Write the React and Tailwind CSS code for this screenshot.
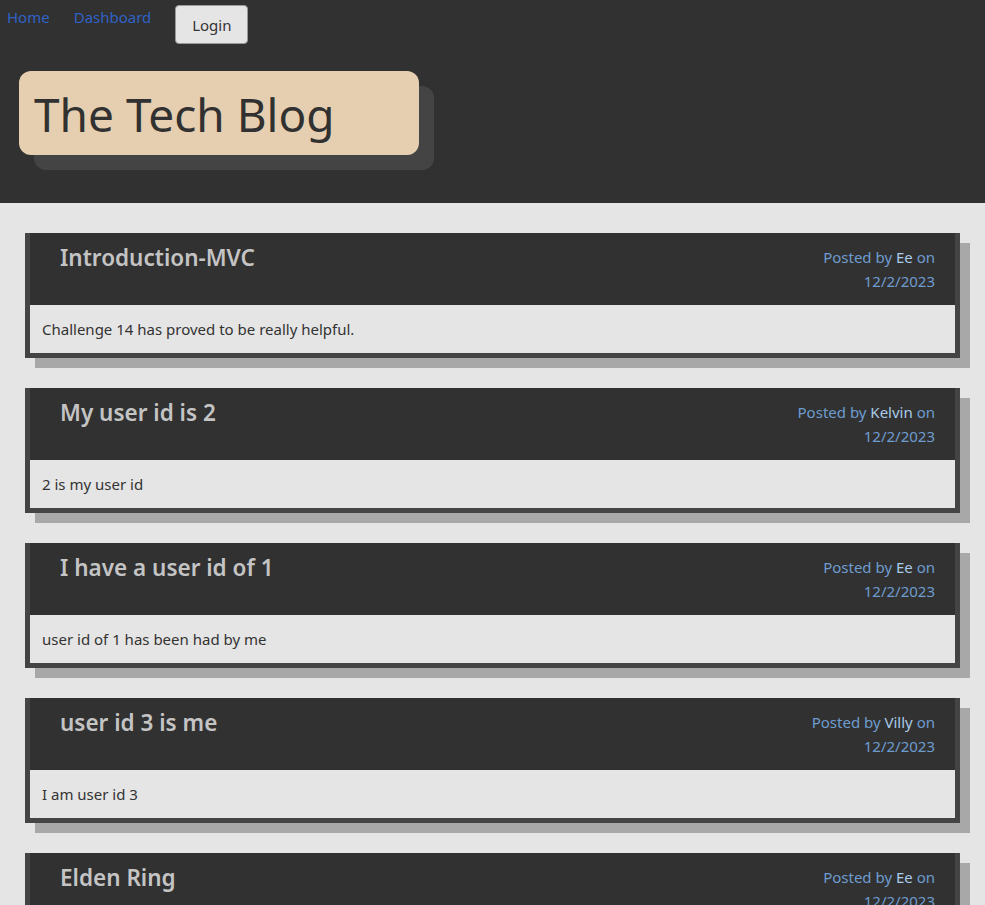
const posts = [
  { title: "Introduction-MVC", author: "Ee", date: "12/2/2023", body: "Challenge 14 has proved to be really helpful." },
  { title: "My user id is 2", author: "Kelvin", date: "12/2/2023", body: "2 is my user id" },
  { title: "I have a user id of 1", author: "Ee", date: "12/2/2023", body: "user id of 1 has been had by me" },
  { title: "user id 3 is me", author: "Villy", date: "12/2/2023", body: "I am user id 3" },
  { title: "Elden Ring", author: "Ee", date: "12/2/2023", body: "" },
];

export default function App() {
  return (
    <div className="min-h-screen bg-[#e5e5e5] font-['Noto_Sans',sans-serif]">
      {/* Header */}
      <header className="h-[203px] bg-[#313131]">
        <nav className="flex items-start pl-[7px] pt-[5px]">
          <a href="#" className="mt-[1px] text-[15px] text-[#2f62c6]">Home</a>
          <a href="#" className="ml-[24px] mt-[1px] text-[15px] text-[#2f62c6]">Dashboard</a>
          <button className="ml-[24px] h-[39px] w-[73px] rounded border border-[#9a9a9a] bg-[#e5e5e5] pt-[1px] text-[15px] text-[#333]">
            Login
          </button>
        </nav>
        <div className="ml-[19px] mt-[27px] flex h-[84px] w-[400px] items-center rounded-xl bg-[#e5cfb0] pl-[15px] shadow-[15px_15px_0_#444]">
          <h1 className="mt-[2px] text-[46px] leading-none text-[#313131]">The Tech Blog</h1>
        </div>
      </header>

      {/* Posts */}
      <main className="flex flex-col gap-[30px] px-[25px] pt-[30px] pb-10">
        {posts.map((p, i) => (
          <PostCard key={i} post={p} />
        ))}
      </main>
    </div>
  );
}

function PostCard({ post }) {
  return (
    <article className="border-x-[5px] border-b-[5px] border-[#444] shadow-[10px_10px_0_#a8a8a8]">
      <div className="flex items-start justify-between bg-[#313131] py-3 pl-[30px] pr-[20px]">
        <h2 className="mt-[1px] text-[22.5px] font-semibold leading-6 text-[#c4c4c4]">{post.title}</h2>
        <p className="text-right text-[15px] leading-6 text-[#6e9ccf]">
          Posted by <span className="text-[#a9cbe8]">{post.author}</span> on
          <br />
          {post.date}
        </p>
      </div>
      <div className="flex h-[48px] items-center bg-[#e5e5e5] px-3 text-[15px] text-[#333]">
        {post.body}
      </div>
    </article>
  );
}
